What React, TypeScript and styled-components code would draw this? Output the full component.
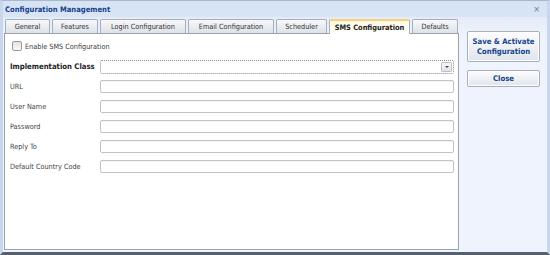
import React from "react";
import styled, { createGlobalStyle, css } from "styled-components";

const Global = createGlobalStyle`
  html, body { margin: 0; padding: 0; background: #ffffff; }
  * { box-sizing: border-box; }
`;

const Window = styled.div`
  width: 550px;
  height: 255px;
  display: flex;
  flex-direction: column;
  font-family: "DejaVu Sans Condensed", "DejaVu Sans", sans-serif;
  font-stretch: condensed;
  font-size: 7.25px;
  color: #333;
  background: #eef3fd;
  border-left: 3px solid #c6d7ef;
  border-right: 3px solid #c6d7ef;
  border-bottom: 3px solid #56606e;
  border-top: 1px solid #aab8c9;
`;

const TitleBar = styled.div`
  height: 16px;
  display: flex;
  align-items: center;
  justify-content: space-between;
  padding: 0 7px 0 2px;
  background: linear-gradient(#d6e3f4, #d9e5f6);
`;

const Title = styled.span`
  font-weight: bold;
  font-size: 7.6px;
  color: #15428b;
`;

const CloseX = styled.span`
  color: #6d7c90;
  font-family: "DejaVu Sans", sans-serif;
  font-size: 9px;
  line-height: 1;
`;

const Body = styled.div`
  flex: 1;
  display: flex;
  gap: 8px;
  padding: 2px 7px 2px 1px;
  background: linear-gradient(#e4ecf8 0px, #eef3fd 18px);
`;

const LeftCol = styled.div`
  width: 455px;
  display: flex;
  flex-direction: column;
`;

const TabStrip = styled.div`
  display: flex;
  align-items: flex-end;
  gap: 2px;
  height: 14px;
  padding-left: 1px;
`;

const Tab = styled.div<{ $w: number; $active?: boolean }>`
  width: ${(p) => p.$w}px;
  height: 14px;
  display: flex;
  align-items: center;
  justify-content: center;
  border: 1px solid #a6b0bc;
  border-bottom: none;
  border-radius: 2px 2px 0 0;
  background: linear-gradient(#f7f8fa, #dde2e8);
  color: #333;
  white-space: nowrap;
  ${(p) =>
    p.$active &&
    css`
      height: 15px;
      margin-bottom: -1px;
      border-top: 2px solid #f6cf7e;
      background: linear-gradient(#fff8e2, #ffffff);
      font-weight: bold;
      font-size: 7.4px;
      color: #222;
      position: relative;
      z-index: 1;
    `}
`;

const Panel = styled.div`
  flex: 1;
  background: #ffffff;
  border: 1px solid #9aa2ac;
  padding: 7px 4px 0 5px;
  display: flex;
  flex-direction: column;
`;

const CheckRow = styled.label`
  display: flex;
  align-items: center;
  gap: 3px;
  height: 10px;
  margin-left: 2px;
  color: #3a3a3a;
`;

const Box = styled.span`
  width: 10px;
  height: 10px;
  border: 1px solid #9a9a9a;
  border-radius: 2px;
  background: linear-gradient(#e2e2e2, #fafafa);
`;

const Form = styled.div`
  display: flex;
  flex-direction: column;
  gap: 7px;
  margin-top: 9px;
`;

const Row = styled.div`
  display: flex;
  align-items: center;
  height: 13px;
`;

const Label = styled.span<{ $bold?: boolean }>`
  width: 90px;
  color: #3f3f3f;
  white-space: nowrap;
  ${(p) =>
    p.$bold &&
    css`
      font-weight: bold;
      font-size: 7.7px;
      color: #222;
    `}
`;

const Input = styled.div`
  width: 354px;
  height: 13px;
  border: 1px solid #c2c2c2;
  border-radius: 2px;
  background: #ffffff;
  box-shadow: inset 0 1px 1px rgba(0, 0, 0, 0.05);
`;

const Select = styled.div`
  width: 354px;
  height: 14px;
  border: 1px dotted #8a8a8a;
  border-radius: 2px;
  background: #fff;
  display: flex;
  justify-content: flex-end;
  align-items: center;
  padding-right: 1px;
`;

const Arrow = styled.span`
  width: 11px;
  height: 10px;
  border: 1px solid #bcc2ca;
  border-radius: 1px;
  background: linear-gradient(#f7f8fa, #dfe3e8);
  display: flex;
  align-items: center;
  justify-content: center;
  &::after {
    content: "";
    border-left: 2px solid transparent;
    border-right: 2px solid transparent;
    border-top: 2px solid #444;
  }
`;

const RightCol = styled.div`
  width: 73px;
  display: flex;
  flex-direction: column;
  gap: 8px;
  padding-top: 12px;
`;

const Button = styled.div<{ $h: number }>`
  height: ${(p) => p.$h}px;
  border: 1px solid #a7afb9;
  border-radius: 2px;
  background: linear-gradient(#fdfdfe, #e0e5ec);
  box-shadow: inset 0 0 0 1px #ffffff;
  display: flex;
  align-items: center;
  justify-content: center;
  text-align: center;
  font-weight: bold;
  font-size: 7.7px;
  line-height: 10px;
  color: #15428b;
`;

const tabs: [string, number, boolean?][] = [
  ["General", 45],
  ["Features", 46],
  ["Login Configuration", 86],
  ["Email Configuration", 86],
  ["Scheduler", 51],
  ["SMS Configuration", 81, true],
  ["Defaults", 46],
];

const fields = ["URL", "User Name", "Password", "Reply To", "Default Country Code"];

export default function App() {
  return (
    <>
      <Global />
      <Window>
        <TitleBar>
          <Title>Configuration Management</Title>
          <CloseX>×</CloseX>
        </TitleBar>
        <Body>
          <LeftCol>
            <TabStrip>
              {tabs.map(([t, w, a]) => (
                <Tab key={t} $w={w} $active={a}>
                  {t}
                </Tab>
              ))}
            </TabStrip>
            <Panel>
              <CheckRow>
                <Box />
                Enable SMS Configuration
              </CheckRow>
              <Form>
                <Row>
                  <Label $bold>Implementation Class</Label>
                  <Select>
                    <Arrow />
                  </Select>
                </Row>
                {fields.map((f) => (
                  <Row key={f}>
                    <Label>{f}</Label>
                    <Input />
                  </Row>
                ))}
              </Form>
            </Panel>
          </LeftCol>
          <RightCol>
            <Button $h={31}>
              Save &amp; Activate
              <br />
              Configuration
            </Button>
            <Button $h={17}>Close</Button>
          </RightCol>
        </Body>
      </Window>
    </>
  );
}
